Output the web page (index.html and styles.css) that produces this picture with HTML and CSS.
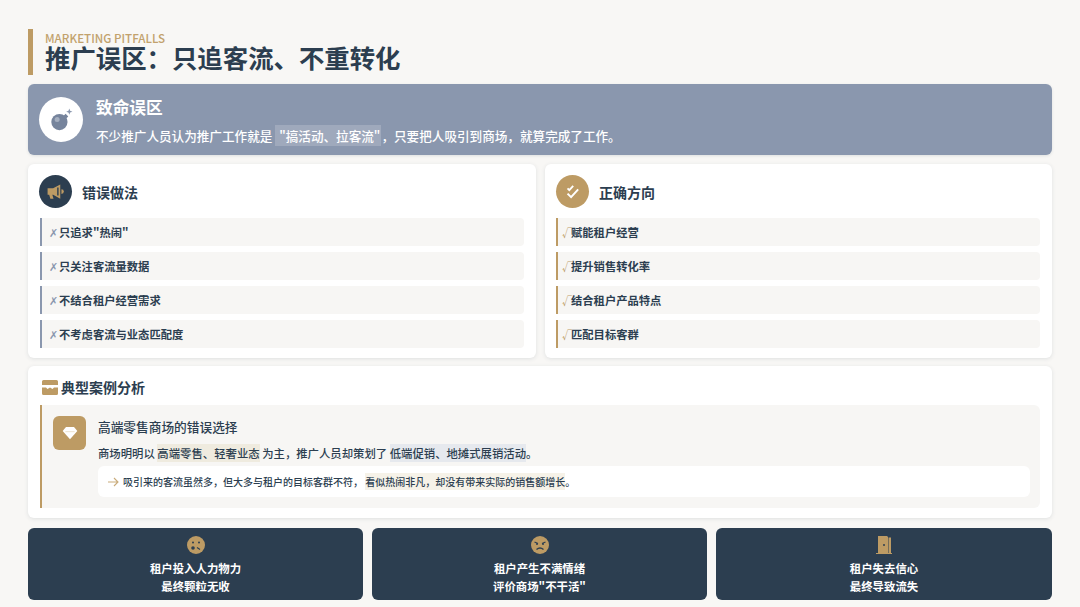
FILE: index.html
```html
<!DOCTYPE html>
<html lang="zh-CN">
<head>
<meta charset="utf-8">
<title>推广误区</title>
<link rel="stylesheet" href="styles.css">
</head>
<body>
<main class="page">
  <header class="head">
    <div class="eyebrow">MARKETING PITFALLS</div>
    <h1 class="title">推广误区：只追客流、不重转化</h1>
  </header>

  <section class="alert">
    <div class="alert-icon">
      <svg viewBox="0 0 24 24" width="25" height="25"><circle cx="10" cy="14.500" r="7.800" fill="#76849c"/><circle cx="7.800" cy="12" r="2.400" fill="#a5afc0"/><path d="M14 8.500l2-2 2.500 2.500-2 2z" fill="#76849c"/><path d="M19.500 1.500l.8 2.200 2.200.8-2.200.8-.8 2.200-.8-2.200-2.200-.8 2.200-.8z" fill="#8a97ae"/></svg>
    </div>
    <div class="alert-body">
      <h2 class="alert-title">致命误区</h2>
      <p class="alert-text">不少推广人员认为推广工作就是 <mark class="alert-mark">"搞活动、拉客流"</mark>，只要把人吸引到商场，就算完成了工作。</p>
    </div>
  </section>

  <section class="compare">
    <article class="card">
      <div class="card-head">
        <span class="round round-dark">
          <svg viewBox="0 0 24 24" width="19" height="19"><path d="M2 8h7l9-5v18l-9-5H8l1.500 5h-4L4 16H2z" fill="#bd9b64"/><path d="M15 7v10" stroke="#2c3e50" stroke-width="1.800"/><path d="M19.500 9a3 3 0 0 1 0 6z" fill="#bd9b64"/></svg>
        </span>
        <h3 class="card-title">错误做法</h3>
      </div>
      <ul class="list list-bad">
        <li class="item item-bad"><span class="mark-bad">✗</span>只追求"热闹"</li>
        <li class="item item-bad"><span class="mark-bad">✗</span>只关注客流量数据</li>
        <li class="item item-bad"><span class="mark-bad">✗</span>不结合租户经营需求</li>
        <li class="item item-bad"><span class="mark-bad">✗</span>不考虑客流与业态匹配度</li>
      </ul>
    </article>
    <article class="card">
      <div class="card-head">
        <span class="round round-gold">
          <svg viewBox="0 0 24 24" width="17" height="17"><path d="M5 7.500l2.500 2.500L13 4" fill="none" stroke="#fff" stroke-width="2.600"/><path d="M5 15l5 5L20 9" fill="none" stroke="#fff" stroke-width="2.800"/></svg>
        </span>
        <h3 class="card-title">正确方向</h3>
      </div>
      <ul class="list">
        <li class="item item-good"><span class="mark-good">√</span>赋能租户经营</li>
        <li class="item item-good"><span class="mark-good">√</span>提升销售转化率</li>
        <li class="item item-good"><span class="mark-good">√</span>结合租户产品特点</li>
        <li class="item item-good"><span class="mark-good">√</span>匹配目标客群</li>
      </ul>
    </article>
  </section>

  <section class="case">
    <h3 class="case-title">
      <svg viewBox="0 0 16 15" width="16" height="15"><path d="M1.500 0h13A1.500 1.500 0 0 1 16 1.500V5H0V1.500A1.500 1.500 0 0 1 1.500 0z" fill="#bd9b64"/><path d="M0 7.500h4l1.500 1.500 2.500-1.500L10.500 9 12 7.500h4v6a1.500 1.500 0 0 1-1.500 1.500h-13A1.500 1.500 0 0 1 0 13.500z" fill="#bd9b64"/></svg>
      典型案例分析
    </h3>
    <div class="case-box">
      <span class="case-icon">
        <svg viewBox="0 0 24 20" width="16" height="14"><path d="M6 1h12l5 6-11 12.500L1 7z" fill="#fff"/><path d="M5 8h14" stroke="#e3d4b8" stroke-width="1"/></svg>
      </span>
      <div class="case-body">
        <h4 class="case-name">高端零售商场的错误选择</h4>
        <p class="case-text">商场明明以 <mark class="tag-sand">高端零售、轻奢业态</mark> 为主，推广人员却策划了 <mark class="tag-blue">低端促销、地摊式展销活动</mark>。</p>
        <p class="case-note"><svg class="arrow" viewBox="0 0 11 10" width="11" height="10"><path d="M0 5h10M6 1l4 4-4 4" fill="none" stroke="#c9ab7a" stroke-width="1.100"/></svg>吸引来的客流虽然多，但大多与租户的目标客群不符， <mark class="tag-cream">看似热闹非凡，却没有带来实际的销售额增长</mark>。</p>
      </div>
    </div>
  </section>

  <section class="results">
    <article class="result">
      <svg class="result-icon" viewBox="0 0 18 18" width="18" height="18"><circle cx="9" cy="9" r="9" fill="#bd9b64"/><circle cx="6" cy="6.500" r="1" fill="#2c3e50"/><circle cx="12" cy="6.500" r="1" fill="#2c3e50"/><circle cx="6" cy="12" r="1.800" fill="#2c3e50"/><path d="M10 11.500l3 2" stroke="#2c3e50" stroke-width="1.200" fill="none"/></svg>
      <p class="result-text">租户投入人力物力<br>最终颗粒无收</p>
    </article>
    <article class="result">
      <svg class="result-icon" viewBox="0 0 18 18" width="18" height="18"><circle cx="9" cy="9" r="9" fill="#bd9b64"/><path d="M3.500 6l3.500 1.500M14.500 6L11 7.500" stroke="#2c3e50" stroke-width="1.300"/><circle cx="6" cy="8" r="1" fill="#2c3e50"/><circle cx="12" cy="8" r="1" fill="#2c3e50"/><path d="M5.500 13.500Q9 10.500 12.500 13.500" stroke="#2c3e50" stroke-width="1.400" fill="none"/></svg>
      <p class="result-text">租户产生不满情绪<br>评价商场"不干活"</p>
    </article>
    <article class="result">
      <svg class="result-icon" viewBox="0 0 16 18" width="16" height="18"><path d="M2 0h9l1 1v17H2z" fill="#bd9b64"/><path d="M12.500 1.500H15V17h1v1H0v-1h12.500z" fill="#bd9b64"/><circle cx="8" cy="9" r="1" fill="#2c3e50"/></svg>
      <p class="result-text">租户失去信心<br>最终导致流失</p>
    </article>
  </section>
</main>
</body>
</html>
```
FILE: styles.css
```css
* { box-sizing: border-box; margin: 0; padding: 0; }
html, body { height: 607px; overflow: hidden; }
body {
  background: #f8f7f5;
  color: #2c3e50;
  font-family: "Noto Sans CJK SC", "Noto Sans", sans-serif;
}
.page {
  display: flex;
  flex-direction: column;
  padding: 29px 28px 0;
}
mark { color: inherit; }

.head {
  height: 46px;
  border-left: 5px solid #bd9b64;
  padding: 3px 0 0 12px;
  margin-bottom: 9px;
}
.eyebrow {
  font-size: 11.600px;
  line-height: 12px;
  font-weight: 500;
  color: #c2a26d;
}
.title {
  font-size: 25.400px;
  line-height: 26px;
  font-weight: 700;
  color: #2c3e50;
}

.alert {
  height: 71px;
  background: #8a97ae;
  border-radius: 6px;
  display: flex;
  align-items: flex-start;
  gap: 13px;
  padding: 0 11px;
  margin-bottom: 9px;
  box-shadow: 0 1px 3px rgba(44, 62, 80, .12);
  color: #fff;
}
.alert-icon {
  width: 44px;
  height: 45px;
  align-self: center;
  border-radius: 50%;
  background: #fff;
  display: flex;
  align-items: center;
  justify-content: center;
  flex: none;
}
.alert-body { padding-top: 11px; }
.alert-title {
  font-size: 16.700px;
  line-height: 24px;
  font-weight: 700;
  margin-bottom: 8px;
}
.alert-text {
  font-size: 12.600px;
  line-height: 18px;
  font-weight: 500;
}
.alert-mark {
  background: rgba(255, 255, 255, .18);
  padding: 1px 1px 1px 4px;
}

.compare {
  display: grid;
  grid-template-columns: 508px 507px;
  gap: 9px;
  margin-bottom: 8px;
}
.card {
  height: 194px;
  background: #fff;
  border-radius: 6px;
  padding: 11px 12px 0 11px;
  box-shadow: 0 1px 4px rgba(44, 62, 80, .12);
}
.card-head {
  display: flex;
  align-items: center;
  gap: 10px;
  height: 33px;
  margin-bottom: 10px;
}
.round {
  width: 33px;
  height: 33px;
  border-radius: 50%;
  display: flex;
  align-items: center;
  justify-content: center;
  flex: none;
}
.round-dark { background: #2c3e50; }
.round-gold { background: #bd9b64; }
.card-title {
  font-size: 14px;
  line-height: 20px;
  font-weight: 700;
}
.list {
  list-style: none;
  display: flex;
  flex-direction: column;
  gap: 6px;
}
.list-bad { margin-left: 1px; }
.item {
  height: 28px;
  background: #f7f6f4;
  border-radius: 0 4px 4px 0;
  display: flex;
  align-items: center;
  padding-left: 7px;
  font-size: 11.300px;
  font-weight: 700;
  color: #2c3e50;
}
.item-bad { border-left: 2px solid #8a97ae; }
.item-good { border-left: 2px solid #bd9b64; padding-left: 4px; }
.mark-bad { color: #8a97ae; width: 10px; font-size: 11px; font-weight: 400; }
.mark-good { color: #bd9b64; width: 9px; font-size: 10px; font-weight: 400; }

.case {
  height: 152px;
  background: #fff;
  border-radius: 6px;
  padding: 11px 12px 0;
  margin-bottom: 10px;
  box-shadow: 0 1px 4px rgba(44, 62, 80, .12);
}
.case-title {
  display: flex;
  align-items: center;
  gap: 3px;
  height: 20px;
  font-size: 14px;
  line-height: 20px;
  font-weight: 700;
  padding-left: 2px;
  margin-bottom: 8px;
}
.case-box {
  height: 103px;
  background: #f7f6f4;
  border-left: 2px solid #bd9b64;
  border-radius: 0 6px 6px 0;
  display: flex;
  gap: 12px;
  padding: 11px 10px 0 11px;
}
.case-icon {
  width: 33px;
  height: 34px;
  background: #bd9b64;
  border-radius: 6px;
  display: flex;
  align-items: center;
  justify-content: center;
  flex: none;
}
.case-body { flex: 1; }
.case-name {
  font-size: 12.700px;
  line-height: 22px;
  font-weight: 500;
  margin-bottom: 7px;
}
.case-text {
  font-size: 11.360px;
  line-height: 16px;
  margin-bottom: 5px;
  font-weight: 500;
}
.tag-sand { background: #efebdf; padding: 1px 0; }
.tag-blue { background: #e6e9ee; padding: 1px 0; }
.tag-cream { background: #f6f2e8; padding: 1px 0; }
.case-note {
  height: 31px;
  background: #fff;
  border-radius: 6px;
  display: flex;
  align-items: center;
  padding-left: 10px;
  font-size: 10px;
  font-weight: 500;
  white-space: pre-wrap;
}
.arrow {
  flex: none;
  margin-right: 4px;
}

.results {
  display: grid;
  grid-template-columns: 335px 335px 336px;
  gap: 9px;
}
.result {
  height: 72px;
  background: #2c3e50;
  border-radius: 6px;
  display: flex;
  flex-direction: column;
  align-items: center;
  padding-top: 8px;
  color: #fff;
}
.result-icon { flex: none; margin-bottom: 5px; }
.result-text {
  font-size: 11.400px;
  line-height: 18px;
  font-weight: 700;
  text-align: center;
}
```
